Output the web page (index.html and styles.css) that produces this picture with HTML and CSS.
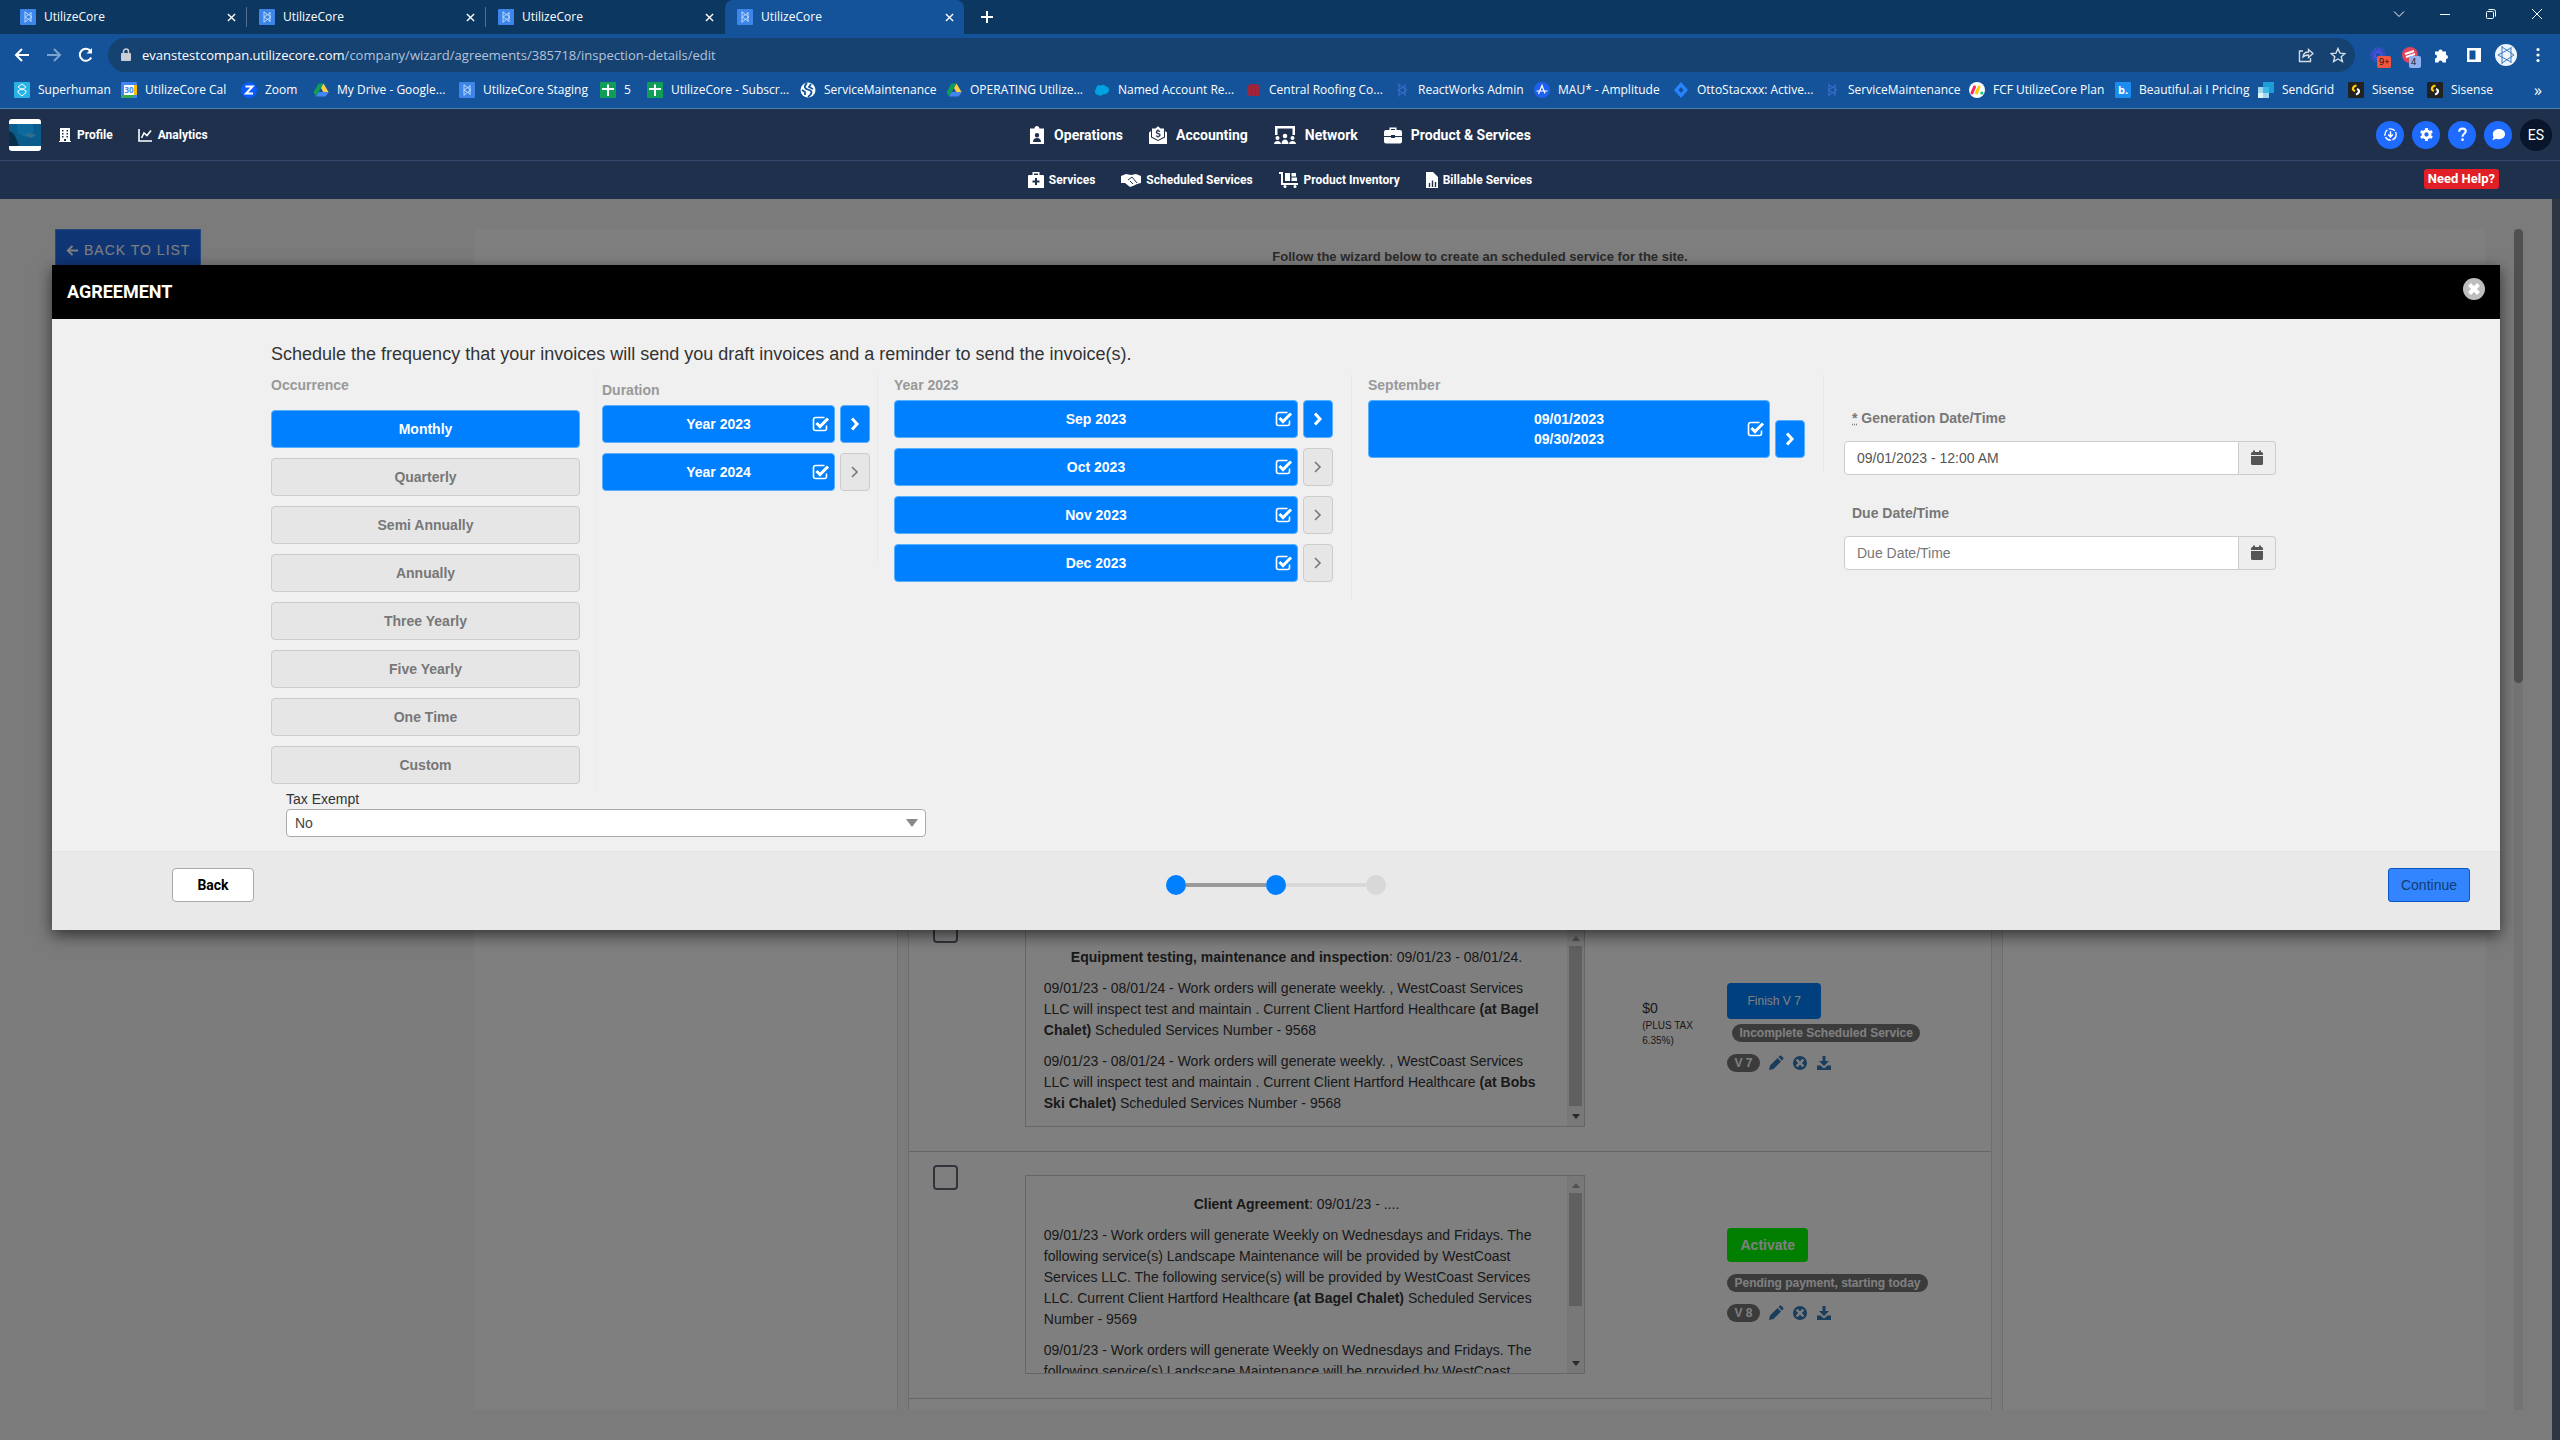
FILE: index.html
```html
<!DOCTYPE html>
<html lang="en">
<head>
<meta charset="utf-8">
<title>UtilizeCore</title>
<link rel="stylesheet" href="styles.css">
</head>
<body>
<svg class="defs" aria-hidden="true">
  <symbol id="core" viewBox="0 0 16 16"><rect width="16" height="16" rx="1" fill="#3d85e8"/><g fill="none" stroke="#b9d9ff" stroke-width="1"><path d="M5 2.500v11M5 3l7 5-7 5M11 3v10M11 4L5 8l6 4"/></g></symbol>
  <symbol id="core-dim" viewBox="0 0 16 16"><g fill="none" stroke="#3a6fd0" stroke-width="1"><path d="M5 1.500v13M5 3l8 5-8 5M11 2v12M11 4L4 8l7 4"/></g></symbol>
  <symbol id="drive" viewBox="0 0 16 16"><path d="M5.500 1.500h5L8 6z" fill="#0f9d58"/><path d="M5.500 1.500L.5 10.500 3 14.500 8 6z" fill="#0f9d58"/><path d="M10.500 1.500L8 6l4.500 8 3-4z" fill="#ffcd40"/><path d="M3 14.500h9.500L15.500 10H5.600z" fill="#4285f4"/></symbol>
  <symbol id="sheet" viewBox="0 0 16 16"><rect width="16" height="16" rx="1" fill="#0f9d58"/><path d="M7 2.500h2V6h5v2H9v6H7V8H2V6h5z" fill="#fff"/></symbol>
  <symbol id="sisense" viewBox="0 0 16 16"><rect width="16" height="16" rx="1" fill="#222"/><path d="M8.500 3.500C4 4.500 4 8 7 9" fill="none" stroke="#ffcb05" stroke-width="2.200"/><path d="M9 7c3 1 2.500 4.500-1 5.500" fill="none" stroke="#fff" stroke-width="2.200"/></symbol>
  <symbol id="x" viewBox="0 0 10 10"><path d="M1 1l8 8M9 1L1 9" fill="none" stroke="currentColor" stroke-width="1.500"/></symbol>
  <symbol id="chev" viewBox="0 0 10 14"><path d="M2 1.500L7 7l-5 5.500" fill="none" stroke="currentColor" stroke-width="3"/></symbol>
  <symbol id="chev-thin" viewBox="0 0 10 14"><path d="M2 2l5 5-5 5" fill="none" stroke="currentColor" stroke-width="1.600"/></symbol>
  <symbol id="check" viewBox="0 0 18 16"><path d="M14.500 9.500v3a2 2 0 0 1-2 2h-9a2 2 0 0 1-2-2v-9a2 2 0 0 1 2-2h9" fill="none" stroke="currentColor" stroke-width="1.600"/><path d="M4.500 7l3.500 3.600L16 2.500" fill="none" stroke="currentColor" stroke-width="3"/></symbol>
  <symbol id="calendar" viewBox="0 0 14 16"><path d="M1 3.500A1.500 1.500 0 0 1 2.500 2H3V.5h2V2h4V.5h2V2h.5A1.500 1.500 0 0 1 13 3.500V5H1z"/><path d="M1 6h12v7.500a1.500 1.500 0 0 1-1.500 1.500h-9A1.500 1.500 0 0 1 1 13.500z"/></symbol>
  <symbol id="pencil" viewBox="0 0 16 16"><path d="M1 15l1-4.500L9.500 3 13 6.500 5.500 14zM10.500 2l1-1c.6-.6 1.500-.6 2.100 0l1.400 1.400c.6.600.6 1.500 0 2.100l-1 1z"/></symbol>
  <symbol id="times-circle" viewBox="0 0 16 16"><path fill-rule="evenodd" d="M8 1a7 7 0 1 0 0 14A7 7 0 0 0 8 1zM5.500 3.800L8 6.200l2.500-2.400 1.700 1.700L9.800 8l2.400 2.500-1.700 1.700L8 9.800l-2.500 2.400-1.700-1.700L6.200 8 3.800 5.500z"/></symbol>
  <symbol id="download" viewBox="0 0 16 16"><path d="M6.500 1h3v5H13L8 11 3 6h3.500z"/><path d="M1 10.500h3.500L8 13.500l3.500-3H15V15H1z"/></symbol>
</svg>

<div class="page">
<header class="browser">
  <div class="tabs">
    <div class="tab"><svg class="fav"><use href="#core"/></svg><span>UtilizeCore</span><svg class="close"><use href="#x"/></svg></div>
    <div class="tab"><svg class="fav"><use href="#core"/></svg><span>UtilizeCore</span><svg class="close"><use href="#x"/></svg></div>
    <div class="tab last"><svg class="fav"><use href="#core"/></svg><span>UtilizeCore</span><svg class="close"><use href="#x"/></svg></div>
    <div class="tab active"><svg class="fav"><use href="#core"/></svg><span>UtilizeCore</span><svg class="close"><use href="#x"/></svg></div>
    <svg class="plus" viewBox="0 0 12 12"><path d="M6 0v12M0 6h12" stroke="#fff" stroke-width="2"/></svg>
    <div class="window-controls">
      <svg viewBox="0 0 12 12"><path d="M1 3.500l5 5 5-5" /></svg>
      <svg viewBox="0 0 12 12"><path d="M1 6.500h10"/></svg>
      <svg viewBox="0 0 12 12"><rect x="1.500" y="3.500" width="7" height="7" rx="1"/><path d="M3.500 1.500h5a2 2 0 0 1 2 2v5"/></svg>
      <svg viewBox="0 0 12 12"><path d="M1 1l10 10M11 1L1 11"/></svg>
    </div>
  </div>
  <div class="toolbar">
    <div class="arrows">
      <svg viewBox="0 0 16 16"><path d="M15 8H2M8 2L2 8l6 6"/></svg>
      <svg class="faded" viewBox="0 0 16 16"><path d="M1 8h13M8 2l6 6-6 6"/></svg>
      <svg viewBox="0 0 16 16"><path d="M13.200 10.500A6 6 0 1 1 12.500 4"/><path d="M14 1v5.500H8.500z" fill="#fff" stroke="none"/></svg>
    </div>
    <div class="address">
      <svg class="lock" viewBox="0 0 10 14"><rect y="5" width="10" height="8" rx="1" fill="#c9ced6"/><path d="M2.500 5V3.500a2.500 2.500 0 0 1 5 0V5" fill="none" stroke="#c9ced6" stroke-width="1.500"/></svg>
      <span class="url"><b>evanstestcompan.utilizecore.com</b>/company/wizard/agreements/385718/inspection-details/edit</span>
      <svg class="addr-icon" viewBox="0 0 16 16"><path d="M5 4H1.500v10.500h11V11M5 10c.3-3.500 2.500-5 5.500-5V2.500L15 6.500l-4.500 4V8C8 8 6.500 8.500 5 10z"/></svg>
      <svg class="addr-icon" viewBox="0 0 16 16"><path d="M8 1.500l2 4.600 5 .4-3.800 3.200 1.200 4.800L8 12l-4.400 2.500 1.200-4.800L1 6.500l5-.4z"/></svg>
    </div>
    <div class="extensions">
      <div class="ext"><svg viewBox="0 0 16 16"><path d="M8 0v16M0 8h16M2.300 2.300l11.400 11.400M13.700 2.300L2.300 13.700M5 .7l6 14.600M11 .7L5 15.300M.7 5l14.600 6M15.300 5L.7 11" stroke="#4b4fe0" stroke-width="1.200"/><circle cx="8" cy="8" r="4" fill="#4b4fe0"/><circle cx="8" cy="8" r="2" fill="#14539a"/></svg><i class="red">9+</i></div>
      <div class="ext"><svg viewBox="0 0 16 16"><circle cx="8" cy="8" r="8" fill="#e2445c"/><path d="M3 7l9-3M4 10l9-3" stroke="#fff" stroke-width="2"/></svg><i>4</i></div>
      <svg viewBox="0 0 16 16"><path d="M1 4.500h3.500a2 2 0 1 1 4 0H12V8a2 2 0 1 1 0 4v3.500H8.500a2 2 0 1 0-4 0H1V11.500a2 2 0 1 0 0-4z" fill="#fff"/></svg>
      <svg viewBox="0 0 16 16"><path fill-rule="evenodd" d="M1 1h14v14H1zM3.500 3.500v9h6v-9z" fill="#fff"/></svg>
      <svg class="avatar" viewBox="0 0 22 22"><circle cx="11" cy="11" r="11" fill="#eef4fb"/><g fill="none" stroke="#3a78c2"><path d="M7 2v18M7 3l12 8-12 8M16 3v16M16 4L3 11l13 7"/></g></svg>
      <svg viewBox="0 0 16 16" fill="#fff"><circle cx="8" cy="2.500" r="1.600"/><circle cx="8" cy="8" r="1.600"/><circle cx="8" cy="13.500" r="1.600"/></svg>
    </div>
  </div>
  <nav class="bookmarks">
    <a href="#"><svg viewBox="0 0 16 16"><rect width="16" height="16" rx="1" fill="#27b3e6"/><path d="M8 2l4 3-4 3-4-3zM4 9l4-2.500L12 9v1.500L8 14l-4-3.500z" fill="none" stroke="#fff"/></svg>Superhuman</a>
    <a href="#"><svg viewBox="0 0 16 16"><rect width="16" height="16" rx="1" fill="#4285f4"/><path d="M13 3h3v10h-3z" fill="#fbbc04"/><path d="M0 13h13v3H0z" fill="#34a853"/><rect x="3" y="3" width="10" height="10" fill="#fff"/><text x="8" y="11" font-size="8" text-anchor="middle" fill="#4285f4" font-weight="700">30</text></svg>UtilizeCore Cal</a>
    <a href="#"><svg viewBox="0 0 16 16"><rect width="16" height="16" rx="8" fill="#0b5cff"/><path d="M4.500 4.500h7l-6.500 7h7" fill="none" stroke="#fff" stroke-width="2"/></svg>Zoom</a>
    <a href="#"><svg><use href="#drive"/></svg>My Drive - Google...</a>
    <a href="#"><svg><use href="#core"/></svg>UtilizeCore Staging</a>
    <a href="#"><svg><use href="#sheet"/></svg>5</a>
    <a href="#"><svg><use href="#sheet"/></svg>UtilizeCore - Subscr...</a>
    <a href="#"><svg viewBox="0 0 16 16"><circle cx="8" cy="8" r="7.500" fill="#fff"/><path d="M7 1c-4 4-2 6 2 7s3 4-1 7M11 2l-2 3 4 2M2 8l3 2v3" fill="none" stroke="#14539a" stroke-width="1.800"/></svg>ServiceMaintenance</a>
    <a href="#"><svg><use href="#drive"/></svg>OPERATING Utilize...</a>
    <a href="#"><svg viewBox="0 0 16 16"><path d="M4 13a3.500 3.500 0 0 1-2-6 3.500 3.500 0 0 1 5-3.500 3.500 3.500 0 0 1 5 1 3.500 3.500 0 0 1 1.500 6.500c-1 1.500-3 1.500-4 1-1.500 2-4 2-5.500 1z" fill="#00a1e0"/></svg>Named Account Re...</a>
    <a href="#"><svg viewBox="0 0 16 16"><path d="M2 4l4-2v12l-4-1zM7 2h3v12H7zM11 2l3 1v11h-3z" fill="#a0243a"/></svg>Central Roofing Co...</a>
    <a href="#"><svg><use href="#core-dim"/></svg>ReactWorks Admin</a>
    <a href="#"><svg viewBox="0 0 16 16"><circle cx="8" cy="8" r="8" fill="#1e61f0"/><path d="M2.500 9h11M4.500 12L8 3.500l3 8" fill="none" stroke="#fff" stroke-width="1.200"/></svg>MAU* - Amplitude</a>
    <a href="#"><svg viewBox="0 0 16 16"><path d="M8 0l7 8-7 8-7-8z" fill="#2684ff"/><path d="M8 5l2.500 3L8 11 5.500 8z" fill="#14539a"/></svg>OttoStacxxx: Active...</a>
    <a href="#"><svg><use href="#core-dim"/></svg>ServiceMaintenance</a>
    <a href="#"><svg viewBox="0 0 16 16"><circle cx="8" cy="8" r="8" fill="#fff"/><g stroke-width="3" stroke-linecap="round"><path d="M3 11l2.500-6" stroke="#fb275d"/><path d="M7.500 11L10 5" stroke="#fc0"/><path d="M12.800 11v0" stroke="#00ca72"/></g></svg>FCF UtilizeCore Plan</a>
    <a href="#"><svg viewBox="0 0 16 16"><rect width="16" height="16" rx="1" fill="#1b8df0"/><text x="8" y="12" font-size="11" font-weight="700" text-anchor="middle" fill="#fff">b.</text></svg>Beautiful.ai I Pricing</a>
    <a href="#"><svg viewBox="0 0 16 16"><path d="M5 0h11v11h-5V5H5z" fill="#1a9fd9"/><path d="M0 5h5v6H0zM5 11h6v5H5z" fill="#9dd8f0"/><path d="M5 5h6v6H5z" fill="#3fb8e6"/><path d="M0 11h5v5H0z" fill="#e2f3fb"/></svg>SendGrid</a>
    <a href="#"><svg><use href="#sisense"/></svg>Sisense</a>
    <a href="#"><svg><use href="#sisense"/></svg>Sisense</a>
    <span class="more">»</span>
  </nav>
</header>

<header class="app">
  <div class="bar">
    <nav class="left">
      <svg class="logo" viewBox="0 0 32 32"><rect width="32" height="32" rx="3" fill="#fff"/><path d="M0 5h32v22H0z" fill="#0a5c8c"/><path d="M8 5h16v9l-8 4-8-4z" fill="#0d6a9c"/><path d="M0 12l4 2 3 5 3 8H0z" fill="#08304c"/><path d="M15 16l6-2 6 2-5 3z" fill="#2f6f8c"/></svg>
      <a class="profile" href="#"><svg viewBox="0 0 12 14"><path fill-rule="evenodd" d="M1 0h10v13h1v1H0v-1h1zM3 2v1.500h1.500V2zM7.500 2v1.500H9V2zM3 5v1.500h1.500V5zM7.500 5v1.500H9V5zM3 8v1.500h1.500V8zM7.500 8v1.500H9V8zM5 11v2h2v-2z"/></svg>Profile</a>
      <a href="#"><svg viewBox="0 0 14 14"><path d="M1 1v12h13M3.500 10L6 5l3 2.500L13 2.500" fill="none" stroke="currentColor" stroke-width="1.600"/></svg>Analytics</a>
    </nav>
    <nav class="main-nav">
      <a class="slim" href="#"><svg viewBox="1 0 16 18"><path fill-rule="evenodd" d="M2 2.500h4.500a2.500 2.500 0 0 1 5 0H16V18H2zM9 7a2.200 2.200 0 1 0 0 4.400A2.200 2.200 0 0 0 9 7zM5 16h8c0-2.500-1.500-4-4-4s-4 1.500-4 4z"/></svg>Operations</a>
      <a href="#"><svg viewBox="0 0 18 18"><path d="M0 6.500l2-1.500v6.500L9 15l7-3.500V5l2 1.500V18H0z"/><path d="M3 2.500h3.500L9 .3l2.500 2.200H15v8.300L9 14l-6-3.200z"/><path d="M11 5.500C9 4.300 7 5 7.500 6.500S11 7.500 11 9s-2.300 1.800-4 .8M9 3.500v1.500M9 10v1.500" fill="none" stroke="#1f304d" stroke-width="1.300"/></svg>Accounting</a>
      <a class="wide" href="#"><svg viewBox="0 0 22 18"><path fill-rule="evenodd" d="M1 0h20v9h-2.500V2.500h-15V9H1z"/><circle cx="3.500" cy="12" r="2"/><circle cx="11" cy="10" r="2.300"/><circle cx="18.500" cy="12" r="2"/><path d="M0 18c0-4 7-4 7 0zM7.500 18c0-6 7-6 7 0zM15 18c0-4 7-4 7 0z"/></svg>Network</a>
      <a href="#"><svg viewBox="0 0 18 18"><path fill-rule="evenodd" d="M5.500 4V1.500h7V4H16a2 2 0 0 1 2 2v4h-7V9H7v1H0V6a2 2 0 0 1 2-2zM7 3v1h4V3z"/><path d="M0 11h7v1h4v-1h7v4.500a2 2 0 0 1-2 2H2a2 2 0 0 1-2-2z"/></svg>Product &amp; Services</a>
    </nav>
    <div class="round">
      <button aria-label="Updates"><svg viewBox="0 0 16 16"><circle cx="8" cy="8" r="6" fill="none" stroke="#fff" stroke-width="1.500" stroke-dasharray="7 1.500"/><path d="M8 4.500v6M5.500 8L8 10.500 10.500 8" fill="none" stroke="#fff" stroke-width="1.600"/></svg></button>
      <button aria-label="Settings"><svg viewBox="0 0 16 16"><circle cx="8" cy="8" r="3.800" fill="none" stroke="#fff" stroke-width="3"/><path d="M8 1v2.500M8 12.500V15M2 4.500l2 1.200M12 10.300l2 1.200M2 11.500l2-1.200M12 5.700l2-1.200" stroke="#fff" stroke-width="3"/></svg></button>
      <button aria-label="Help"><svg viewBox="0 0 16 16"><path d="M4.500 5c0-4.500 7-4 7-.5C11.500 7 8 7 8 10.500" fill="none" stroke="#fff" stroke-width="2.200"/><circle cx="8" cy="13.500" r="1.400" fill="#fff"/></svg></button>
      <button aria-label="Chat"><svg viewBox="0 0 16 16"><path d="M8.500 2C12.500 2 15 4.500 15 7.500S12.500 13 8.500 13c-1 0-2-.2-3-.6L1.500 14l1.200-3.500C2 9.500 2 8.500 2 7.500 2 4.500 4.500 2 8.500 2z" fill="#fff"/></svg></button>
      <button class="user">ES</button>
    </div>
  </div>
  <div class="bar sub">
    <div></div>
    <nav class="sub-nav">
      <a href="#"><svg viewBox="0 0 16 16"><path fill-rule="evenodd" d="M4.500 3V0h7v3H15a1 1 0 0 1 1 1v12H0V4a1 1 0 0 1 1-1zM6 1.500V3h4V1.500zM7 6v2.500H4.500v2H7V13h2v-2.500h2.500v-2H9V6z"/></svg>Services</a>
      <a class="shake" href="#"><svg viewBox="0 0 20 14"><path d="M0 3l5-2 5 1 5-1 5 2v7l-4 1-4 2-3 1-5-4H0z"/><path d="M7 7l4-3 5 6M9 8l3 3" fill="none" stroke="#1f304d"/></svg>Scheduled Services</a>
      <a class="cart" href="#"><svg viewBox="0 0 20 16"><path d="M0 0h4v11h15v2H2V2H0z"/><path d="M6 1h5v8H6zM12.500 1H17v3.500h-4.500zM12.500 5.500H18V9h-5.500z"/><circle cx="6" cy="14.500" r="1.500"/><circle cx="16" cy="14.500" r="1.500"/></svg>Product Inventory</a>
      <a class="bill" href="#"><svg viewBox="0 0 12 16"><path d="M0 0h7l5 5v11H0z"/><path d="M3.500 15v-4M6.500 15V8.500M9.500 15v-5" stroke="#1f304d" stroke-width="1.400"/></svg>Billable Services</a>
    </nav>
    <button class="need-help">Need Help?</button>
  </div>
</header>

<main class="stage">
  <div class="under">
    <div class="side"><button class="back-list"><svg viewBox="0 0 14 14"><path d="M13 7H2M7 2L2 7l5 5" fill="none" stroke="currentColor" stroke-width="2.200"/></svg>BACK TO LIST</button></div>
    <section class="panel">
      <p class="hint">Follow the wizard below to create an scheduled service for the site.</p>
      <div class="list">
        <div class="list-inner">
          <article class="row">
            <input type="checkbox" aria-label="Select agreement V 7">
            <div class="note">
              <div class="note-text">
                <p class="title"><b>Equipment testing, maintenance and inspection</b>: 09/01/23 - 08/01/24.</p>
                <p>09/01/23 - 08/01/24 - Work orders will generate weekly. , WestCoast Services LLC will inspect test and maintain . Current Client Hartford Healthcare <b>(at Bagel Chalet)</b> Scheduled Services Number - 9568</p>
                <p>09/01/23 - 08/01/24 - Work orders will generate weekly. , WestCoast Services LLC will inspect test and maintain . Current Client Hartford Healthcare <b>(at Bobs Ski Chalet)</b> Scheduled Services Number - 9568</p>
              </div>
              <div class="scroll"><i class="up"></i><i class="thumb tall"></i><i class="down"></i></div>
            </div>
            <div class="price">$0<small>(PLUS TAX 6.35%)</small></div>
            <div class="actions">
              <button class="finish">Finish V 7</button>
              <span class="badge inset">Incomplete Scheduled Service</span>
              <div class="tools"><span class="badge">V 7</span><svg><use href="#pencil"/></svg><svg><use href="#times-circle"/></svg><svg><use href="#download"/></svg></div>
            </div>
          </article>
          <article class="row">
            <input type="checkbox" aria-label="Select agreement V 8">
            <div class="note">
              <div class="note-text">
                <p class="title"><b>Client Agreement</b>: 09/01/23 - ....</p>
                <p>09/01/23 - Work orders will generate Weekly on Wednesdays and Fridays. The following service(s) Landscape Maintenance will be provided by WestCoast Services LLC. The following service(s) will be provided by WestCoast Services LLC. Current Client Hartford Healthcare <b>(at Bagel Chalet)</b> Scheduled Services Number - 9569</p>
                <p>09/01/23 - Work orders will generate Weekly on Wednesdays and Fridays. The following service(s) Landscape Maintenance will be provided by WestCoast</p>
              </div>
              <div class="scroll"><i class="up"></i><i class="thumb"></i><i class="down"></i></div>
            </div>
            <div class="price"></div>
            <div class="actions">
              <button class="activate">Activate</button>
              <span class="badge">Pending payment, starting today</span>
              <div class="tools"><span class="badge">V 8</span><svg><use href="#pencil"/></svg><svg><use href="#times-circle"/></svg><svg><use href="#download"/></svg></div>
            </div>
          </article>
          <div class="stub"></div>
        </div>
      </div>
    </section>
    <div class="page-scroll"><i></i></div>
  </div>
  <div class="backdrop"></div>

  <div class="modal" role="dialog" aria-labelledby="modal-title">
    <div class="modal-head">
      <h1 id="modal-title">AGREEMENT</h1>
      <button class="modal-close" aria-label="Close"><svg viewBox="0 0 22 22"><circle cx="11" cy="11" r="11" fill="#bdbdbd"/><path d="M6.500 6.500l9 9M15.500 6.500l-9 9" stroke="#fff" stroke-width="4"/></svg></button>
    </div>
    <div class="modal-body">
      <h2>Schedule the frequency that your invoices will send you draft invoices and a reminder to send the invoice(s).</h2>
      <div class="columns">
        <div class="col occurrence">
          <h3>Occurrence</h3>
          <button class="opt on">Monthly</button>
          <button class="opt">Quarterly</button>
          <button class="opt">Semi Annually</button>
          <button class="opt">Annually</button>
          <button class="opt">Three Yearly</button>
          <button class="opt">Five Yearly</button>
          <button class="opt">One Time</button>
          <button class="opt">Custom</button>
        </div>
        <div class="col duration">
          <h3>Duration</h3>
          <div class="pair"><button class="opt on"><span>Year 2023</span><svg><use href="#check"/></svg></button><button class="next on" aria-label="Show 2023"><svg><use href="#chev"/></svg></button></div>
          <div class="pair"><button class="opt on"><span>Year 2024</span><svg><use href="#check"/></svg></button><button class="next" aria-label="Show 2024"><svg><use href="#chev-thin"/></svg></button></div>
        </div>
        <div class="col months">
          <h3>Year 2023</h3>
          <div class="pair"><button class="opt on"><span>Sep 2023</span><svg><use href="#check"/></svg></button><button class="next on" aria-label="Show September"><svg><use href="#chev"/></svg></button></div>
          <div class="pair"><button class="opt on"><span>Oct 2023</span><svg><use href="#check"/></svg></button><button class="next" aria-label="Show October"><svg><use href="#chev-thin"/></svg></button></div>
          <div class="pair"><button class="opt on"><span>Nov 2023</span><svg><use href="#check"/></svg></button><button class="next" aria-label="Show November"><svg><use href="#chev-thin"/></svg></button></div>
          <div class="pair"><button class="opt on"><span>Dec 2023</span><svg><use href="#check"/></svg></button><button class="next" aria-label="Show December"><svg><use href="#chev-thin"/></svg></button></div>
        </div>
        <div class="col days">
          <h3>September</h3>
          <div class="pair"><button class="opt on double"><span>09/01/2023<br>09/30/2023</span><svg><use href="#check"/></svg></button><button class="next on" aria-label="Show dates"><svg><use href="#chev"/></svg></button></div>
        </div>
        <div class="dates">
          <label for="gen"><abbr title="required">*</abbr> Generation Date/Time</label>
          <div class="group"><input id="gen" type="text" value="09/01/2023 - 12:00 AM"><button aria-label="Pick generation date"><svg><use href="#calendar"/></svg></button></div>
          <label for="due">Due Date/Time</label>
          <div class="group"><input id="due" type="text" placeholder="Due Date/Time"><button aria-label="Pick due date"><svg><use href="#calendar"/></svg></button></div>
        </div>
      </div>
      <div class="tax">
        <label for="tax">Tax Exempt</label>
        <div class="select"><select id="tax"><option>No</option><option>Yes</option></select><svg viewBox="0 0 12 8"><path d="M0 0h12L6 8z"/></svg></div>
      </div>
    </div>
    <div class="modal-foot">
      <button class="back">Back</button>
      <div class="steps"><i class="dot"></i><i class="line"></i><i class="dot"></i><i class="line todo"></i><i class="dot todo"></i></div>
      <button class="continue">Continue</button>
    </div>
  </div>
</main>
</div>
</body>
</html>
```

FILE: styles.css
```css
* { box-sizing: border-box; }

body {
  margin: 0;
  font: 14px/20px "Liberation Sans", Arial, sans-serif;
  color: #333;
}
button, input, select { font: inherit; }
button { cursor: pointer; }
h1, h2, h3, p { margin: 0; }
a { color: inherit; text-decoration: none; }
i { font-style: normal; }
.defs { display: none; }

.page { display: flex; flex-direction: column; height: 100vh; overflow: hidden; }

/* browser frame */
.browser {
  flex: none;
  background: #14539a;
  border-bottom: 1px solid #4d80ad;
  color: #fff;
  font: 12px/16px "Open Sans", "Noto Sans", sans-serif;
}
.tabs { display: flex; align-items: center; height: 34px; padding-left: 8px; background: #0c3761; }
.tab { display: flex; align-items: center; gap: 8px; width: 239px; height: 20px; padding: 0 10px 0 12px; border-right: 1px solid #4f7090; }
.tab.last { border-color: transparent; }
.tab span { flex: 1; }
.tab.active { height: 34px; border: 0; border-radius: 8px 8px 0 0; background: #14539a; }
.fav { width: 16px; height: 16px; }
.close { width: 9px; height: 9px; }
.plus { width: 12px; height: 12px; margin-left: 17px; }
.window-controls { display: flex; gap: 34px; margin-left: auto; padding: 0 17px 6px 0; }
.window-controls svg { width: 12px; height: 12px; fill: none; stroke: #fff; stroke-width: 1; }

.toolbar { display: flex; align-items: center; height: 42px; padding: 0 14px; }
.arrows { display: flex; gap: 16px; width: 94px; fill: none; stroke: #fff; stroke-width: 2; }
.arrows svg { width: 16px; height: 16px; }
.arrows .faded { stroke: #7ba3d0; }
.address { display: flex; flex: 1; align-items: center; gap: 16px; height: 34px; padding: 0 9px 0 13px; border-radius: 17px; background: #164272; }
.lock { width: 10px; height: 14px; margin-right: -5px; }
.url { flex: 1; color: #b3c4da; font: 13px/18px "Open Sans", "Noto Sans", sans-serif; }
.url b { color: #fff; font-weight: 400; }
.addr-icon { width: 16px; height: 16px; fill: none; stroke: #d4deea; stroke-width: 1.4; }
.extensions { display: flex; align-items: center; gap: 16px; padding-left: 15px; }
.extensions svg { width: 16px; height: 16px; }
.extensions .avatar { width: 22px; height: 22px; margin: 0 -3px; }
.ext { position: relative; display: flex; }
.ext i { position: absolute; left: 7px; top: 9px; min-width: 12px; padding: 0 2px; border-radius: 2px; background: #8fb0ef; color: #111; font-size: 9px; line-height: 12px; }
.ext .red { background: #f0563f; }

.bookmarks {
  display: grid;
  grid-template-columns: 107fr 120fr 72fr 146fr 141fr 47fr 153fr 146fr 148fr 151fr 149fr 140fr 139fr 151fr 145fr 146fr 143fr 90fr 79fr 107fr 20fr;
  align-items: center;
  height: 32px;
  padding: 0 6px 4px 14px;
}
.bookmarks a { display: flex; gap: 8px; align-items: center; min-width: 0; white-space: nowrap; }
.bookmarks svg { flex: none; width: 16px; height: 16px; }
.more { font-size: 16px; }

/* application header */
.app { flex: none; background: #1f304d; color: #fff; font-family: Roboto, sans-serif; font-weight: 700; }
.bar { display: grid; grid-template-columns: 1fr auto 1fr; align-items: center; height: 52px; padding: 0 8px; border-bottom: 1px solid #33496b; }
.bar.sub { height: 38px; border: 0; font-size: 12px; }
.bar a { display: flex; align-items: center; gap: 6px; }
.bar a svg { width: 14px; height: 14px; fill: currentColor; }
.left { display: flex; align-items: center; gap: 25px; font-size: 12px; }
.left .logo { width: 32px; height: 32px; margin-left: 1px; }
.left .profile { margin-left: -7px; }
.bar .left .profile svg { width: 12px; }
.main-nav { display: flex; gap: 26px; }
.bar .main-nav svg { width: 18px; height: 18px; }
.bar .main-nav .wide svg { width: 22px; }
.bar .main-nav .slim svg { width: 16px; }
.main-nav a { gap: 9px; }
.sub-nav { display: flex; gap: 26px; }
.bar .sub-nav a { gap: 5px; }
.bar .sub-nav svg { width: 16px; height: 16px; }
.bar .sub-nav .shake svg, .bar .sub-nav .cart svg { width: 20px; }
.bar .sub-nav .bill svg { width: 12px; }
.round { display: flex; align-items: center; justify-content: flex-end; gap: 8px; }
.round button { display: grid; place-items: center; width: 28px; height: 28px; padding: 0; border: 0; border-radius: 50%; background: #1f6bff; color: #fff; }
.round svg { width: 15px; height: 15px; }
.round .user { width: 32px; height: 32px; background: #08152a; font-weight: 400; }
.need-help { justify-self: end; height: 20px; margin: 0 53px 2px 0; padding: 0 4px; border: 0; border-radius: 3px; background: #e01f26; color: #fff; font-size: 13px; line-height: 20px; font-weight: 700; }

/* page behind the dialog */
.stage { position: relative; flex: 1; min-height: 0; background: #2d3642; }
.under {
  display: grid;
  grid-template-columns: 474fr 2012fr 66fr;
  height: 100%;
  margin-right: 8px;
  padding: 30px 0;
  background: #f6f6f6;
}
.side { padding-left: 55px; }
.back-list { display: flex; align-items: center; gap: 5px; height: 42px; padding: 0 10px; border: 1px solid #4a90ff; background: #1f6bea; color: #fff; letter-spacing: 1px; }
.back-list svg { width: 13px; height: 13px; }
.panel { display: flex; flex-direction: column; min-width: 0; min-height: 0; background: #fff; }
.hint { padding-top: 18px; text-align: center; font-size: 13px; font-weight: 700; color: #555; }
.list { flex: 1; display: flex; min-height: 0; margin: 0 24% 0 21%; padding: 0 10px; border: solid #ddd; border-width: 0 1px; background: #f6f6f6; }
.list-inner { flex: 1; display: flex; flex-direction: column; justify-content: flex-end; border: solid #ddd; border-width: 0 1px; background: #fff; }
.row { display: grid; grid-template-columns: 116fr 559fr 142fr 263fr; height: 247px; border-top: 1px solid #ccc; }
.row input { appearance: none; width: 25px; height: 25px; margin: 13px 0 0 24px; border: 2px solid #667; border-radius: 4px; }
.note { display: flex; height: 199px; margin-top: 23px; border: 1px solid #ccc; }
.note-text { flex: 1; overflow: hidden; padding: 18px; line-height: 21px; }
.note-text p { margin-bottom: 10px; }
.title { text-align: center; }
.scroll { display: flex; flex-direction: column; align-items: center; width: 17px; padding: 7px 0; background: #f1f1f1; }
.up, .down { border: 4px solid transparent; border-top: 0; border-bottom: 5px solid #a3a3a3; }
.down { margin-top: auto; border-bottom: 0; border-top: 5px solid #505050; }
.thumb { width: 13px; height: 113px; margin-top: 5px; background: #c1c1c1; }
.thumb.tall { height: 160px; }
.price { align-self: center; padding: 0 20px 10px 57px; }
.price small { display: block; font-size: 10px; line-height: 15px; }
.actions { display: flex; flex-direction: column; align-items: flex-start; align-self: center; }
.finish, .activate { height: 36px; padding: 0 20px; border: 0; border-radius: 4px; background: #0080ff; color: #fff; font-size: 12px; }
.activate { height: 34px; margin-bottom: 12px; padding: 0 13px; background: #0f0; font-size: 14px; font-weight: 700; }
.badge { height: 18px; padding: 0 7px; border-radius: 9px; background: #777; color: #fff; font-size: 12px; line-height: 18px; font-weight: 700; white-space: nowrap; }
.badge.inset { margin: 5px 0 0 5px; }
.tools { display: flex; align-items: center; gap: 8px; margin: 12px 0 1px; }
.tools svg { width: 16px; height: 16px; fill: #337ab7; }
.page-scroll { width: 9px; margin-left: 28px; background: #e8e8e8; }
.page-scroll i { display: block; height: 454px; border-radius: 5px; background: #a0a0a0; }
.stub { height: 12px; border-top: 1px solid #ccc; }
.backdrop { position: absolute; inset: 0 8px 0 0; background: rgba(0, 0, 0, .5); }

/* dialog */
.modal { position: absolute; left: 52px; right: 60px; top: 66px; background: #f0f0f0; box-shadow: 0 5px 15px rgba(0, 0, 0, .6); }
.modal-head { display: flex; justify-content: space-between; align-items: center; height: 54px; padding: 0 15px; background: #000; color: #fff; }
.modal-head h1 { font: 700 18px/24px Roboto, sans-serif; }
.modal-close { display: flex; margin-bottom: 6px; padding: 0; border: 0; background: none; }
.modal-close svg { width: 22px; height: 22px; }
.modal-body { padding: 25px 219px 14px; }
h2 { font-size: 18px; line-height: 20px; font-weight: 400; }
.columns { display: grid; grid-template-columns: 331fr 292fr 474fr 476fr 437fr; align-items: start; margin-top: 11px; }
h3 { margin-bottom: 5px; font-size: 14px; line-height: 20px; color: #999; }
.col { display: flex; flex-direction: column; gap: 10px; border-right: 1px solid #e8e8e8; }
.col h3 { margin-bottom: -5px; }
.occurrence { margin-right: 6px; padding: 0 15px 5px 0; border-color: #ececec; }
.col.occurrence h3 { margin-bottom: 5px; }
.duration { margin-right: 16px; padding: 5px 7px 70px 0; }
.months { margin-right: 16px; padding: 0 18px 18px 0; }
.days { margin-right: 20px; padding: 0 18px 14px 0; }
.opt, .next { height: 38px; border: 1px solid #ccc; border-radius: 4px; background: #e6e6e6; color: #777; font-weight: 700; }
.opt.on, .next.on { border-color: #56b0ff; background: #0080ff; color: #fff; }
.pair { display: flex; align-items: flex-end; gap: 5px; }
.pair .opt { display: grid; grid-template-columns: 1fr auto 1fr; align-items: center; flex: 1; padding: 0 4px; }
.pair .opt span { grid-column: 2; }
.pair .opt svg { justify-self: end; width: 18px; height: 16px; }
.pair .opt.double { height: 58px; }
.next { display: grid; place-items: center; width: 30px; padding: 0; }
.next svg { width: 10px; height: 14px; }
.dates { display: flex; flex-direction: column; padding: 33px 5px 0 0; }
.dates label { padding-left: 8px; font-weight: 700; color: #777; }
.dates .group { margin: 13px 0 28px; }
.group { display: flex; }
.group input { flex: 1; min-width: 0; height: 34px; padding: 0 12px; border: 1px solid #ccc; border-radius: 4px 0 0 4px; background: #fff; color: #555; }
.group input::placeholder { color: #777; }
.group button { display: grid; place-items: center; width: 37px; padding: 0; border: 1px solid #ccc; border-left: 0; border-radius: 0 4px 4px 0; background: #eee; fill: #555; }
.group svg { width: 14px; height: 16px; }
.tax { width: 32%; margin-left: 15px; padding-right: 3px; }
.tax label { display: block; }
.select { display: grid; align-items: center; }
.select select { grid-area: 1 / 1; appearance: none; height: 28px; padding: 0 8px; border: 1px solid #aaa; border-radius: 4px; background: #fff; color: #444; }
.select svg { grid-area: 1 / 1; justify-self: end; width: 12px; height: 8px; margin-right: 8px; fill: #888; pointer-events: none; }
.modal-foot { display: grid; grid-template-columns: 1fr auto 1fr; align-items: start; height: 79px; padding: 16px 30px; border-top: 1px solid #e3e3e3; background: #e9e9e9; }
.back { justify-self: start; width: 82px; height: 34px; margin-left: 90px; border: 1px solid #aaa; border-radius: 4px; background: #fff; color: #000; font-family: Roboto, sans-serif; font-weight: 700; }
.continue { justify-self: end; width: 82px; height: 34px; border: 1px solid #0b55c4; border-radius: 3px; background: #3385ff; color: #123c73; }
.steps { display: flex; align-items: center; height: 34px; }
.dot { width: 20px; height: 20px; border-radius: 50%; background: #0080ff; }
.line { width: 80px; height: 4px; background: #999; }
.dot.todo, .line.todo { background: #d8d8d8; }
```
